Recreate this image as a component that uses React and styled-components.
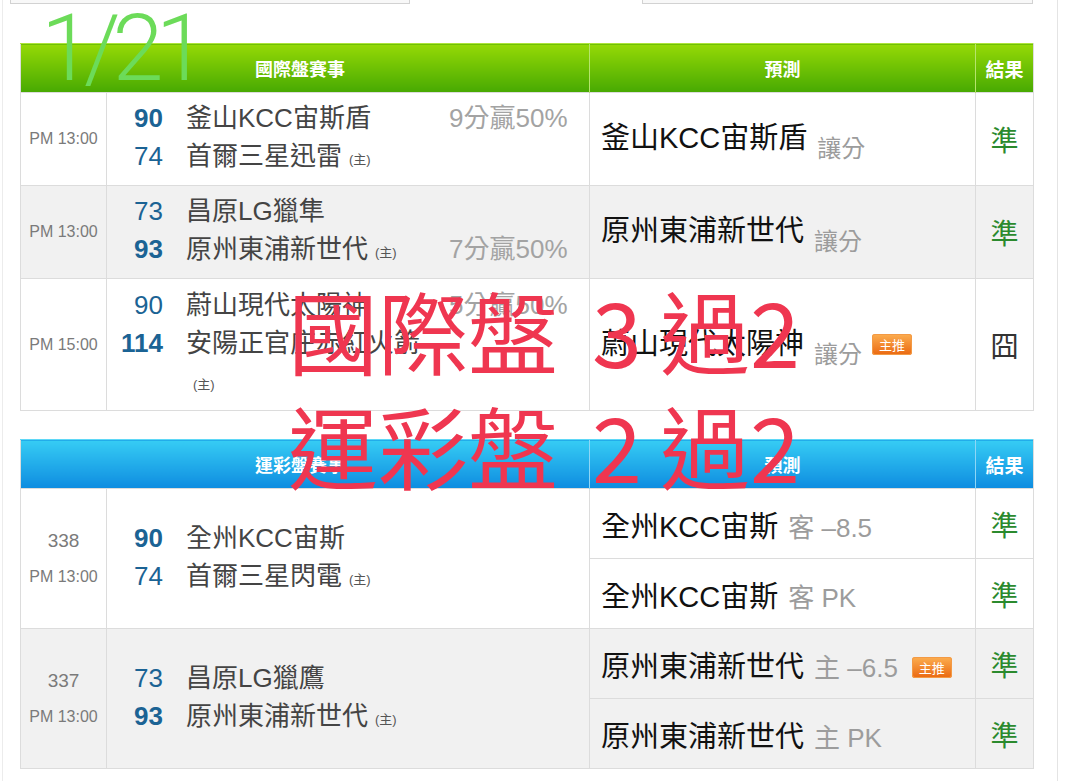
import React from "react";
import styled, { createGlobalStyle, css } from "styled-components";

const intl = [
  {
    time: "PM 13:00",
    lines: [
      { score: 90, win: true, name: "釜山KCC宙斯盾", odds: "9分贏50%" },
      { score: 74, name: "首爾三星迅雷", home: true },
    ],
    pick: "釜山KCC宙斯盾",
    note: "讓分",
    result: "準",
  },
  {
    time: "PM 13:00",
    shaded: true,
    lines: [
      { score: 73, name: "昌原LG獵隼" },
      { score: 93, win: true, name: "原州東浦新世代", home: true, odds: "7分贏50%" },
    ],
    pick: "原州東浦新世代",
    note: "讓分",
    result: "準",
  },
  {
    time: "PM 15:00",
    tall: true,
    lines: [
      { score: 90, name: "蔚山現代太陽神", odds: "5分贏50%" },
      { score: 114, win: true, name: "安陽正官庄赤紅火箭", home: true },
    ],
    pick: "蔚山現代太陽神",
    note: "讓分",
    badge: true,
    result: "囧",
    fail: true,
  },
];

const lottery = [
  {
    no: 338,
    time: "PM 13:00",
    lines: [
      { score: 90, win: true, name: "全州KCC宙斯" },
      { score: 74, name: "首爾三星閃電", home: true },
    ],
    picks: [
      { name: "全州KCC宙斯", note: "客 –8.5", result: "準" },
      { name: "全州KCC宙斯", note: "客 PK", result: "準" },
    ],
  },
  {
    no: 337,
    time: "PM 13:00",
    shaded: true,
    lines: [
      { score: 73, name: "昌原LG獵鷹" },
      { score: 93, win: true, name: "原州東浦新世代", home: true },
    ],
    picks: [
      { name: "原州東浦新世代", note: "主 –6.5", badge: true, result: "準" },
      { name: "原州東浦新世代", note: "主 PK", result: "準" },
    ],
  },
];

const GlobalStyle = createGlobalStyle`
  body {
    margin: 0;
    background: #fff;
    font-family: "Liberation Sans", "Noto Sans CJK TC", sans-serif;
  }
`;

const Page = styled.div`
  position: relative;
  margin-left: 2px;
  width: 1013px;
  min-height: 781px;
  padding: 0 24px 0 17px;
  border-left: 1px solid #ececec;
  border-right: 1px solid #e4e4e4;
  overflow: hidden;
`;

const TabBar = styled.div`
  display: flex;
  height: 4px;
  margin-left: -10px;
`;

const Tab = styled.div`
  width: ${(p) => p.$w}px;
  box-sizing: border-box;
  border: 1px solid #d2d2d2;
  border-top: none;
  background: #f8f8f8;
  ${(p) =>
    p.$active &&
    css`
      border-color: transparent;
      background: #fff;
    `}
`;

const tones = {
  green: { bg: "linear-gradient(#95d906, #47a902)", line: "#b6e46c", top: "#aee33a" },
  blue: { bg: "linear-gradient(#36ccf4, #0e8ce0)", line: "#8ed6f6", top: "#5fd8f7" },
};

const Board = styled.table`
  width: 1013px;
  table-layout: fixed;
  border-collapse: collapse;
  margin-top: ${(p) => p.$gap}px;

  td {
    border: 1px solid #dcdcdc;
    padding: 0;
  }
`;

const Head = styled.th`
  height: 48px;
  padding: 0;
  background: ${(p) => tones[p.$tone].bg};
  border-top: 1px solid ${(p) => tones[p.$tone].top};
  border-left: 1px solid ${(p) => tones[p.$tone].line};
  color: #fff;
  font-family: "Noto Sans CJK TC", sans-serif;
  font-size: 18px;
  font-weight: 700;
  text-align: center;
  &:first-child {
    border-left: 1px solid #dcdcdc;
    text-indent: -10px;
  }
  &:last-child {
    border-right: 1px solid #dcdcdc;
    font-size: 19px;
  }
`;

const Row = styled.tr`
  height: ${(p) => p.$h}px;
  background: ${(p) => (p.$shaded ? "#f1f1f1" : "#fff")};
`;

const TimeCell = styled.td`
  text-align: center;
  color: #7a7a7a;
  font-size: 16px;
  line-height: 36px;
`;

const GameNo = styled.div`
  font-size: 19px;
`;

const MatchCell = styled.td`
  && {
    padding-right: 24px;
  }
`;

const Lines = styled.div`
  display: grid;
  grid-template-columns: 56px 240px 1fr;
  column-gap: 23px;
  line-height: 38px;
  font-size: 26px;
`;

const Score = styled.span`
  text-align: right;
  color: #1b6394;
  font-weight: ${(p) => (p.$win ? 700 : 400)};
`;

const Team = styled.span`
  color: #444;
`;

const HomeMark = styled.span`
  display: inline-block;
  margin-left: 7px;
  font-size: 13px;
  color: #555;
  vertical-align: 1px;
`;

const Odds = styled.span`
  text-align: right;
  color: #a3a3a3;
  white-space: nowrap;
`;

const PickCell = styled.td`
  && {
    padding-left: 11px;
  }
  font-size: 29px;
  color: #111;
  white-space: nowrap;
`;

const PickNote = styled.span`
  margin-left: 10px;
  font-size: ${(p) => (p.$drop ? 24 : 26)}px;
  color: #9c9c9c;
  vertical-align: ${(p) => (p.$drop ? "-9px" : "0")};
`;

const Badge = styled.span`
  display: inline-block;
  width: 40px;
  height: 21px;
  margin-left: ${(p) => p.$gap}px;
  border-radius: 3px;
  background: linear-gradient(#fcae50, #ea6811);
  box-shadow: 0 0 0 1px #f39a45 inset;
  color: #fff;
  font-family: "Noto Sans CJK TC", sans-serif;
  font-size: 13px;
  line-height: 21px;
  text-align: center;
  vertical-align: 4px;
`;

const ResultCell = styled.td`
  text-align: center;
  font-size: 28px;
  font-family: "Noto Sans CJK TC", sans-serif;
  color: ${(p) => (p.$fail ? "#333" : "#2b8a2e")};
`;

const DateMark = styled.div`
  position: absolute;
  top: 3px;
  left: 38px;
  font-family: Roboto, sans-serif;
  font-weight: 300;
  font-size: 92px;
  line-height: 1;
  letter-spacing: -8px;
  color: #6cdb59;
`;

const Stamp = styled.div`
  position: absolute;
  top: 272px;
  left: 285px;
  font-family: "Noto Sans CJK TC", sans-serif;
  font-weight: 400;
  font-size: 90px;
  line-height: 115px;
  color: #ef3650;
`;

const StampLine = styled.div`
  white-space: nowrap;
`;

const StampNum = styled.span`
  display: inline-block;
  margin-left: ${(p) => p.$before}px;
  margin-right: ${(p) => p.$after}px;
`;

const MatchLines = ({ lines }) => (
  <Lines>
    {lines.map((l) => (
      <React.Fragment key={l.name}>
        <Score $win={l.win}>{l.score}</Score>
        <Team>
          {l.name}
          {l.home && <HomeMark>(主)</HomeMark>}
        </Team>
        <Odds>{l.odds}</Odds>
      </React.Fragment>
    ))}
  </Lines>
);

const Header = ({ tone, title }) => (
  <tr>
    <Head $tone={tone} colSpan={2}>
      {title}
    </Head>
    <Head $tone={tone}>預測</Head>
    <Head $tone={tone}>結果</Head>
  </tr>
);

const Cols = () => (
  <colgroup>
    <col style={{ width: 86 }} />
    <col style={{ width: 483 }} />
    <col style={{ width: 386 }} />
    <col style={{ width: 58 }} />
  </colgroup>
);

const Tally = ({ label, hit, total }) => (
  <StampLine>
    {label}
    <StampNum $before={34} $after={18}>
      {total}
    </StampNum>
    過
    <StampNum $before={0} $after={0}>
      {hit}
    </StampNum>
  </StampLine>
);

export default function App() {
  return (
    <Page>
      <GlobalStyle />
      <TabBar>
        <Tab $w={400} />
        <Tab $w={233} $active />
        <Tab $w={391} />
      </TabBar>

      <Board $gap={39}>
        <Cols />
        <thead>
          <Header tone="green" title="國際盤賽事" />
        </thead>
        <tbody>
          {intl.map((g, i) => (
            <Row key={i} $h={g.tall ? 132 : 93} $shaded={g.shaded}>
              <TimeCell>{g.time}</TimeCell>
              <MatchCell>
                <MatchLines lines={g.lines} />
              </MatchCell>
              <PickCell>
                {g.pick}
                <PickNote $drop>{g.note}</PickNote>
                {g.badge && <Badge $gap={10}>主推</Badge>}
              </PickCell>
              <ResultCell $fail={g.fail}>{g.result}</ResultCell>
            </Row>
          ))}
        </tbody>
      </Board>

      <Board $gap={28}>
        <Cols />
        <thead>
          <Header tone="blue" title="運彩盤賽事" />
        </thead>
        <tbody>
          {lottery.map((g) =>
            g.picks.map((p, j) => (
              <Row key={`${g.no}-${j}`} $h={70} $shaded={g.shaded}>
                {j === 0 && (
                  <>
                    <TimeCell rowSpan={2}>
                      <GameNo>{g.no}</GameNo>
                      {g.time}
                    </TimeCell>
                    <MatchCell rowSpan={2}>
                      <MatchLines lines={g.lines} />
                    </MatchCell>
                  </>
                )}
                <PickCell>
                  {p.name}
                  <PickNote>{p.note}</PickNote>
                  {p.badge && <Badge $gap={14}>主推</Badge>}
                </PickCell>
                <ResultCell>{p.result}</ResultCell>
              </Row>
            ))
          )}
        </tbody>
      </Board>

      <DateMark>1/21</DateMark>
      <Stamp>
        <Tally label="國際盤" total={3} hit={2} />
        <Tally label="運彩盤" total={2} hit={2} />
      </Stamp>
    </Page>
  );
}
